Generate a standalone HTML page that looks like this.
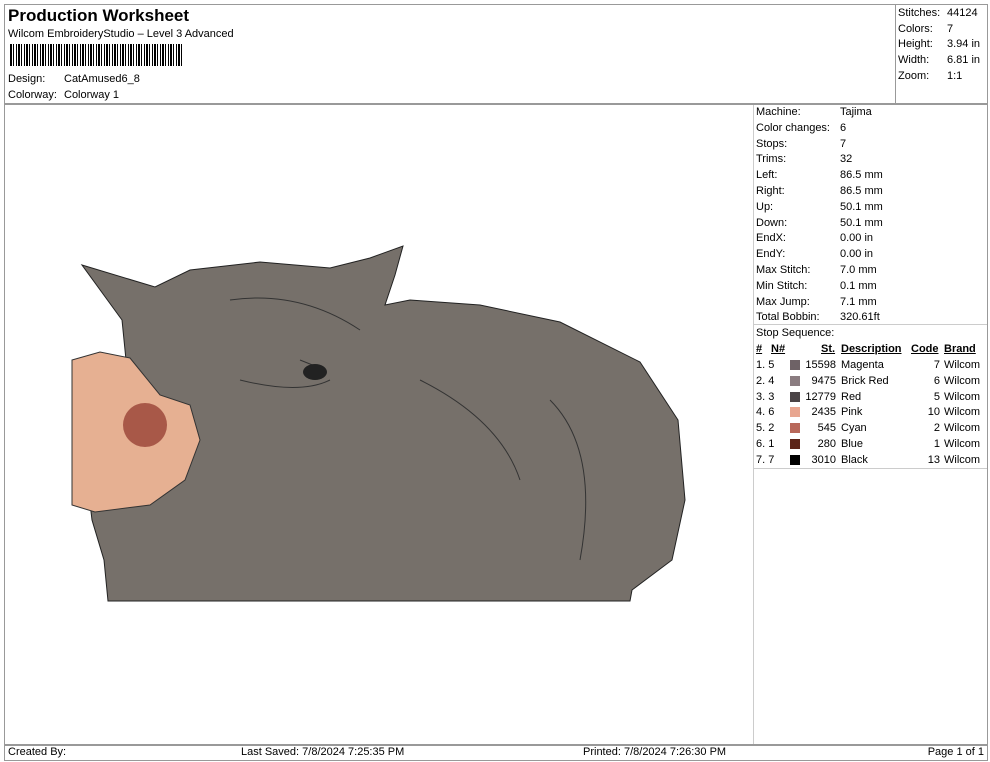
<!DOCTYPE html>
<html><head><meta charset="utf-8"><style>
*{margin:0;padding:0;box-sizing:border-box}
body{width:990px;height:762px;background:#fff;font-family:"Liberation Sans",Arial,sans-serif;color:#000;position:relative;overflow:hidden;font-size:11px}
.a{position:absolute;white-space:nowrap}
.ln{position:absolute;background:#999}
</style></head><body>
<div class="ln" style="left:4px;top:4px;width:984px;height:1px"></div>
<div class="ln" style="left:4px;top:4px;width:1px;height:757px"></div>
<div class="ln" style="left:987px;top:4px;width:1px;height:757px"></div>
<div class="ln" style="left:4px;top:103px;width:984px;height:2px"></div>
<div class="ln" style="left:895px;top:4px;width:1px;height:99px"></div>
<div class="ln" style="left:753px;top:105px;width:1px;height:639px;background:#ccc"></div>
<div class="ln" style="left:753px;top:324px;width:234px;height:1px;background:#ccc"></div>
<div class="ln" style="left:753px;top:468px;width:234px;height:1px;background:#ccc"></div>
<div class="ln" style="left:4px;top:744px;width:984px;height:2px"></div>
<div class="ln" style="left:4px;top:760px;width:984px;height:1px"></div>

<div class="a" style="left:8px;top:6px;font-size:17px;font-weight:bold">Production Worksheet</div>
<div class="a" style="left:8px;top:28px">Wilcom EmbroideryStudio – Level 3 Advanced</div>
<div class="a" style="left:10px;top:44px;width:173px;height:22px;background:repeating-linear-gradient(90deg,#000 0 2px,#fff 2px 3px,#000 3px 4px,#fff 4px 6px,#000 6px 7px,#fff 7px 8px)"></div>
<div class="a" style="left:8px;top:73px">Design:</div><div class="a" style="left:64px;top:73px">CatAmused6_8</div>
<div class="a" style="left:8px;top:89px">Colorway:</div><div class="a" style="left:64px;top:89px">Colorway 1</div>

<div class="a" style="left:898px;top:6px;line-height:15.7px">Stitches:<br>Colors:<br>Height:<br>Width:<br>Zoom:</div>
<div class="a" style="left:947px;top:6px;line-height:15.7px">44124<br>7<br>3.94 in<br>6.81 in<br>1:1</div>

<div class="a" style="left:756px;top:105px;line-height:15.8px">Machine:<br>Color changes:<br>Stops:<br>Trims:<br>Left:<br>Right:<br>Up:<br>Down:<br>EndX:<br>EndY:<br>Max Stitch:<br>Min Stitch:<br>Max Jump:<br>Total Bobbin:<br>Stop Sequence:</div>
<div class="a" style="left:840px;top:105px;line-height:15.8px">Tajima<br>6<br>7<br>32<br>86.5 mm<br>86.5 mm<br>50.1 mm<br>50.1 mm<br>0.00 in<br>0.00 in<br>7.0 mm<br>0.1 mm<br>7.1 mm<br>320.61ft</div>

<div style="position:absolute;left:756px;top:342px;line-height:15.8px">
<div class="a" style="left:0;font-weight:bold;text-decoration:underline">#</div>
<div class="a" style="left:15px;font-weight:bold;text-decoration:underline">N#</div>
<div class="a" style="left:65px;font-weight:bold;text-decoration:underline">St.</div>
<div class="a" style="left:85px;font-weight:bold;text-decoration:underline">Description</div>
<div class="a" style="left:155px;font-weight:bold;text-decoration:underline">Code</div>
<div class="a" style="left:188px;font-weight:bold;text-decoration:underline">Brand</div>
</div>
<div class="a" style="left:756px;top:358px;line-height:15.8px">1. 5<br>2. 4<br>3. 3<br>4. 6<br>5. 2<br>6. 1<br>7. 7</div>
<div class="a" style="left:790px;top:360px;width:10px">
<div style="height:10px;background:#6e6266;margin-bottom:5.8px"></div>
<div style="height:10px;background:#8a7c80;margin-bottom:5.8px"></div>
<div style="height:10px;background:#4a4446;margin-bottom:5.8px"></div>
<div style="height:10px;background:#e8a690;margin-bottom:5.8px"></div>
<div style="height:10px;background:#b8685a;margin-bottom:5.8px"></div>
<div style="height:10px;background:#5c2418;margin-bottom:5.8px"></div>
<div style="height:10px;background:#000"></div></div>
<div class="a" style="left:800px;top:358px;width:36px;text-align:right;line-height:15.8px">15598<br>9475<br>12779<br>2435<br>545<br>280<br>3010</div>
<div class="a" style="left:841px;top:358px;line-height:15.8px">Magenta<br>Brick Red<br>Red<br>Pink<br>Cyan<br>Blue<br>Black</div>
<div class="a" style="left:900px;top:358px;width:40px;text-align:right;line-height:15.8px">7<br>6<br>5<br>10<br>2<br>1<br>13</div>
<div class="a" style="left:944px;top:358px;line-height:15.8px">Wilcom<br>Wilcom<br>Wilcom<br>Wilcom<br>Wilcom<br>Wilcom<br>Wilcom</div>

<svg class="a" style="left:0;top:0" width="760" height="740">
<polygon points="82,265 155,287 190,270 260,262 330,268 370,258 403,246 395,275 385,305 410,300 480,305 560,322 640,362 678,420 685,500 672,560 632,590 630,601 108,601 104,560 92,520 86,470 112,420 128,380 122,320" fill="#76706a" stroke="#222" stroke-width="1"/>
<polygon points="72,360 100,352 130,358 160,395 190,405 200,440 185,480 150,505 95,512 72,505" fill="#e6b092" stroke="#333"/>
<ellipse cx="145" cy="425" rx="22" ry="22" fill="#a85848"/>
<path d="M230 300 Q300 290 360 330 M240 380 Q300 395 330 380 M300 360 L325 370 M420 380 Q500 420 520 480 M550 400 Q600 450 580 560" stroke="#333" fill="none"/>
<ellipse cx="315" cy="372" rx="12" ry="8" fill="#222"/>
</svg>

<div class="a" style="left:8px;top:746px">Created By:</div>
<div class="a" style="left:241px;top:746px">Last Saved: 7/8/2024 7:25:35 PM</div>
<div class="a" style="left:583px;top:746px">Printed: 7/8/2024 7:26:30 PM</div>
<div class="a" style="right:6px;top:746px">Page 1 of 1</div>
</body></html>
